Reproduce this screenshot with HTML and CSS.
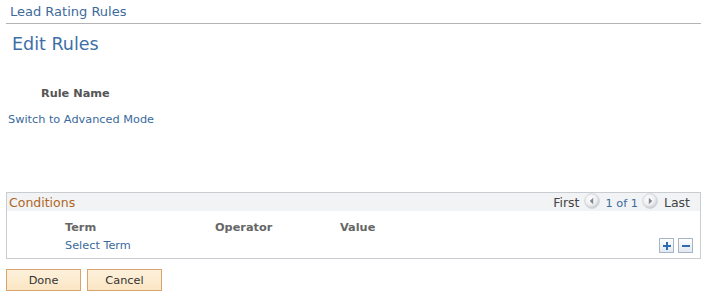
FILE: index.html
```html
<!DOCTYPE html>
<html>
<head>
<meta charset="utf-8">
<link rel="stylesheet" href="styles.css">
</head>
<body>
<div class="page">
  <div class="crumb">Lead Rating Rules</div>
  <h1 class="title">Edit Rules</h1>
  <div class="rule-name">Rule Name</div>
  <a class="link adv">Switch to Advanced Mode</a>
  <div class="grid">
    <div class="grid-head">
      <span class="grid-title">Conditions</span>
      <span class="nav">
        <span class="nav-txt">First</span>
        <svg class="circ" width="16" height="16" viewBox="0 0 16 16"><defs><radialGradient id="g1" cx="0.42" cy="0.38" r="0.7"><stop offset="0" stop-color="#ffffff"/><stop offset="0.55" stop-color="#eceef0"/><stop offset="1" stop-color="#b9bec4"/></radialGradient></defs><circle cx="8" cy="8" r="7.4" fill="url(#g1)" stroke="#cfd3d7" stroke-width="0.8"/><path d="M9.2 4.8 L5.8 8 L9.2 11.2 Z" fill="#7f858c"/></svg>
        <span class="nav-num">1 of 1</span>
        <svg class="circ" width="16" height="16" viewBox="0 0 16 16"><defs><radialGradient id="g2" cx="0.42" cy="0.38" r="0.7"><stop offset="0" stop-color="#ffffff"/><stop offset="0.55" stop-color="#eceef0"/><stop offset="1" stop-color="#b9bec4"/></radialGradient></defs><circle cx="8" cy="8" r="7.4" fill="url(#g2)" stroke="#cfd3d7" stroke-width="0.8"/><path d="M6.8 4.8 L10.2 8 L6.8 11.2 Z" fill="#7f858c"/></svg>
        <span class="nav-txt">Last</span>
      </span>
    </div>
    <div class="grid-body">
      <div class="cols">
        <span class="col c1">Term</span>
        <span class="col c2">Operator</span>
        <span class="col c3">Value</span>
      </div>
      <div class="row">
        <a class="link c1">Select Term</a>
        <span class="btns">
          <span class="ibtn"><svg width="10" height="10" viewBox="0 0 10 10"><path d="M5 1 V9 M1 5 H9" stroke="#2e6db0" stroke-width="2"/></svg></span>
          <span class="ibtn"><svg width="10" height="10" viewBox="0 0 10 10"><path d="M1 5 H9" stroke="#2e6db0" stroke-width="2"/></svg></span>
        </span>
      </div>
    </div>
  </div>
  <div class="actions">
    <button class="btn">Done</button>
    <button class="btn">Cancel</button>
  </div>
</div>
</body>
</html>
```
FILE: styles.css
```css
html, body { margin: 0; padding: 0; background: #fff; }
body { font-family: "DejaVu Sans", Verdana, sans-serif; font-size: 11.3px; color: #333; }
.page { padding: 4px 10px 0 6px; }
.crumb { font-size: 13px; color: #3d6a9a; padding: 0 0 3px 4px; border-bottom: 1px solid #b3b3b3; line-height: 16px; }
.title { font-size: 17.5px; font-weight: normal; color: #3d6fa6; margin: 10px 0 0 6px; line-height: 21px; }
.rule-name { font-weight: bold; color: #555; margin: 32px 0 0 35px; line-height: 14px; }
.link { color: #3a6a9c; text-decoration: none; cursor: pointer; }
.adv { display: block; margin: 12px 0 0 2px; line-height: 14px; }
.grid { margin-top: 65px; border: 1px solid #c9cdd1; }
.grid-head { display: flex; justify-content: space-between; align-items: center; background: #f1f3f4; height: 18px; padding: 0 10px 0 2px; }
.grid-title { font-size: 12.5px; color: #b0651d; }
.nav { display: flex; align-items: center; font-size: 12.5px; color: #444; }
.nav-txt { line-height: 18px; padding-top: 2px; }
.nav-txt:first-child { margin-right: 4px; }
.nav-num { font-size: 11.3px; color: #3a6a9c; margin: 3px 4px 0 6px; }
.circ { display: block; margin-top: -2px; flex: none; }
.nav .circ + .nav-txt { margin-left: 6px; }
.grid-body { padding: 10px 7px 5px 0; }
.cols, .row { display: flex; line-height: 14px; }
.col { font-weight: bold; color: #666; }
.c1 { margin-left: 58px; width: 150px; }
.c2 { width: 125px; }
.row { margin-top: 3px; justify-content: space-between; align-items: flex-end; }
.btns { display: flex; gap: 4px; }
.ibtn { display: flex; align-items: center; justify-content: center; width: 13px; height: 13px; border: 1px solid #a3b5c6; background: linear-gradient(#ffffff, #e2e8ee); }
.actions { display: flex; gap: 6px; margin-top: 10px; }
.btn { font-family: "DejaVu Sans", Verdana, sans-serif; font-size: 11.3px; color: #333; width: 75px; height: 22px; border: 1px solid #d9a56f; background: linear-gradient(#fdf1dc, #fbe6c4); padding: 0; }
```
